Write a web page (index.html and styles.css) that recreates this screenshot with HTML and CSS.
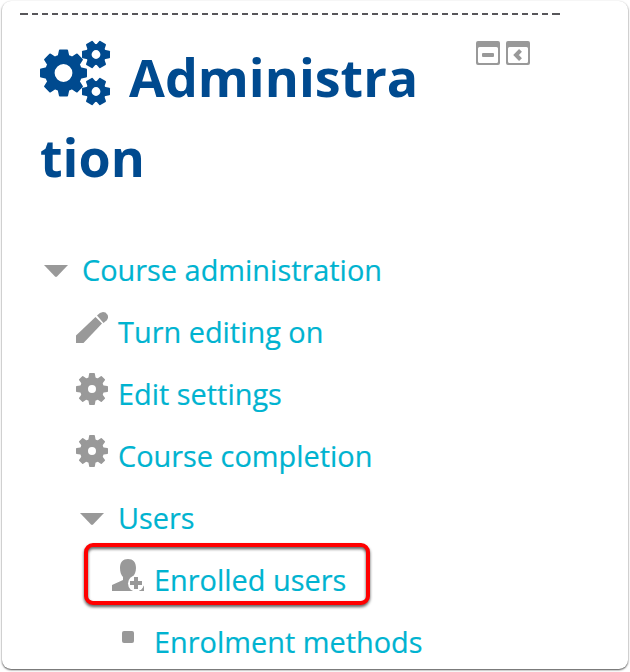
FILE: index.html
```html
<!DOCTYPE html>
<html lang="en">
<head>
<meta charset="utf-8">
<title>Administration</title>
<link rel="stylesheet" href="styles.css">
</head>
<body>
<svg class="defs" width="0" height="0" aria-hidden="true">
  <defs>
    <path id="tooth8" d="M-6-16 L-4.600-22.500 Q-4.500-23.500-3.600-23.500 L3.600-23.500 Q4.500-23.500 4.600-22.500 L6-16Z"/>
    <g id="gear8">
      <circle r="13.7" fill="none" stroke="currentColor" stroke-width="9.600"/>
      <g fill="currentColor">
        <use href="#tooth8"/><use href="#tooth8" transform="rotate(45)"/><use href="#tooth8" transform="rotate(90)"/><use href="#tooth8" transform="rotate(135)"/>
        <use href="#tooth8" transform="rotate(180)"/><use href="#tooth8" transform="rotate(225)"/><use href="#tooth8" transform="rotate(270)"/><use href="#tooth8" transform="rotate(315)"/>
      </g>
    </g>
    <path id="tooth6" d="M-4.800-8.500 L-3.800-13.3 Q-3.600-14-3-14 L3-14 Q3.600-14 3.800-13.3 L4.800-8.500Z"/>
    <g id="gear6">
      <circle r="7.4" fill="none" stroke="currentColor" stroke-width="6"/>
      <g fill="currentColor">
        <use href="#tooth6" transform="rotate(30)"/><use href="#tooth6" transform="rotate(90)"/><use href="#tooth6" transform="rotate(150)"/>
        <use href="#tooth6" transform="rotate(210)"/><use href="#tooth6" transform="rotate(270)"/><use href="#tooth6" transform="rotate(330)"/>
      </g>
    </g>
    <path id="tooth" d="M-3.800-10 L-2.900-15.300 Q-2.800-16-2.200-16 L2.200-16 Q2.800-16 2.900-15.300 L3.800-10Z"/>
    <g id="cog">
      <circle r="8" fill="none" stroke="currentColor" stroke-width="8"/>
      <g fill="currentColor">
        <use href="#tooth"/><use href="#tooth" transform="rotate(45)"/><use href="#tooth" transform="rotate(90)"/><use href="#tooth" transform="rotate(135)"/>
        <use href="#tooth" transform="rotate(180)"/><use href="#tooth" transform="rotate(225)"/><use href="#tooth" transform="rotate(270)"/><use href="#tooth" transform="rotate(315)"/>
      </g>
    </g>
  </defs>
</svg>
<main class="card">
  <svg class="divider" width="540" height="2"><path d="M0 1H8M532 1H540" stroke="#57565a" stroke-width="2"/><path d="M2 1H540" stroke="#57565a" stroke-width="2" stroke-dasharray="6 4"/></svg>
  <header class="header">
    <h2 class="title"><svg class="gears" width="71" height="66" viewBox="0 0 71 66"><use href="#gear8" x="23.5" y="33"/><use href="#gear6" x="56" y="14.5"/><use href="#gear6" x="56" y="51.5"/></svg>Administra<br>tion</h2>
    <div class="actions">
      <svg width="24" height="24"><path fill-rule="evenodd" d="M2 0H22Q24 0 24 2V22Q24 24 22 24H2Q0 24 0 22V2Q0 0 2 0ZM3.5 6Q2 6 2 7.5V20.5Q2 22 3.5 22H20.5Q22 22 22 20.5V7.500Q22 6 20.500 6Z"/><rect x="6" y="12" width="12" height="4" rx="1"/></svg>
      <svg width="24" height="24"><path fill-rule="evenodd" d="M2 0H22Q24 0 24 2V22Q24 24 22 24H2Q0 24 0 22V2Q0 0 2 0ZM3.5 6Q2 6 2 7.5V20.5Q2 22 3.5 22H20.5Q22 22 22 20.5V7.500Q22 6 20.500 6Z"/><path d="M14.500 9.300L10 14L14.500 18.700" fill="none" stroke="#999" stroke-width="4"/></svg>
    </div>
  </header>
  <ul class="tree">
    <li class="row root"><svg class="caret" width="24" height="12"><path d="M0 0H24L13 11.500Q12 12.300 11 11.500Z"/></svg><a>Course administration</a></li>
    <li class="row"><svg class="icon" width="32" height="32"><path d="M0 24.500L19.500 6L26 12.500L7.500 32H0Z"/><path d="M21 4.500Q25-.5 29.500 1.500Q34 5.500 30.500 9.500L27.500 12Z"/></svg><a>Turn editing on</a></li>
    <li class="row"><svg class="icon" width="32" height="32"><use href="#cog" x="16" y="16"/></svg><a>Edit settings</a></li>
    <li class="row"><svg class="icon" width="32" height="32"><use href="#cog" x="16" y="16"/></svg><a>Course completion</a></li>
    <li class="row"><svg class="caret inner" width="24" height="12"><path d="M0 0H24L13 11.500Q12 12.300 11 11.500Z"/></svg><a>Users</a></li>
    <li class="row leaf marked"><svg class="icon" width="32" height="32"><path d="M8 9C8 3 11 0 16 0S24 3 24 9C24 13 22.500 16 20.500 18V21L32 27V32H0V26L11 21V18C9 16 8 13 8 9Z"/><circle cx="24" cy="24.500" r="8" fill="#fff"/><path d="M22 18H26V22H30V26H26V30H22V26H18V22H22Z"/><path d="M32 27V32H27Q31 31 32 27Z"/></svg><a>Enrolled users</a></li>
    <li class="row leaf"><svg class="bullet" width="12" height="12"><rect width="12" height="12" rx="2"/></svg><a>Enrolment methods</a></li>
  </ul>
</main>
</body>
</html>
```
FILE: styles.css
```css
* { box-sizing: border-box; }
body {
  margin: 0;
  height: 672px;
  padding: 1px 2px 3px;
  overflow: hidden;
  background: #fff;
  font-family: "Open Sans", sans-serif;
}
.defs { display: block; }
.card {
  height: 668px;
  padding: 12px 18px 0;
  border-radius: 9px;
  background: #fff;
  box-shadow: 0 1px 2px 0 rgba(0, 0, 0, .7);
  overflow: hidden;
}
.divider { display: block; }
.header {
  display: flex;
  justify-content: space-between;
  width: 510px;
  height: 224px;
  padding: 22px 0 0 20px;
}
.title {
  margin: 0;
  color: #004a8f;
  font-size: 52px;
  line-height: 80px;
  white-space: nowrap;
}
.gears {
  margin-right: 18px;
  vertical-align: -9px;
}
.actions {
  display: flex;
  gap: 6px;
  height: 24px;
  margin-top: 4px;
}
.actions svg, .icon, .caret, .bullet {
  flex: none;
  color: #999;
  fill: #999;
}
.tree {
  margin: 0;
  padding: 0;
  list-style: none;
}
.row {
  display: flex;
  align-items: center;
  height: 62px;
  padding-left: 56px;
  color: #00b3d0;
  font-size: 28.9px;
  line-height: 60px;
  white-space: nowrap;
  -webkit-text-stroke: .2px;
}
.root { padding-left: 24px; }
.leaf { padding-left: 92px; }
.icon { margin: 0 10px 10px 0; }
.caret { margin: 2px 14px 0 0; }
.caret.inner { margin-left: 4px; }
.bullet { margin: 0 20px 10px 10px; }
.marked { position: relative; }
.marked::after {
  content: "";
  position: absolute;
  box-sizing: border-box;
  left: 64px;
  top: -6px;
  width: 286px;
  height: 62px;
  border: 4px solid #f00;
  border-radius: 9px;
  filter: drop-shadow(0 2px 1.500px rgba(0, 0, 0, .65));
}
```
